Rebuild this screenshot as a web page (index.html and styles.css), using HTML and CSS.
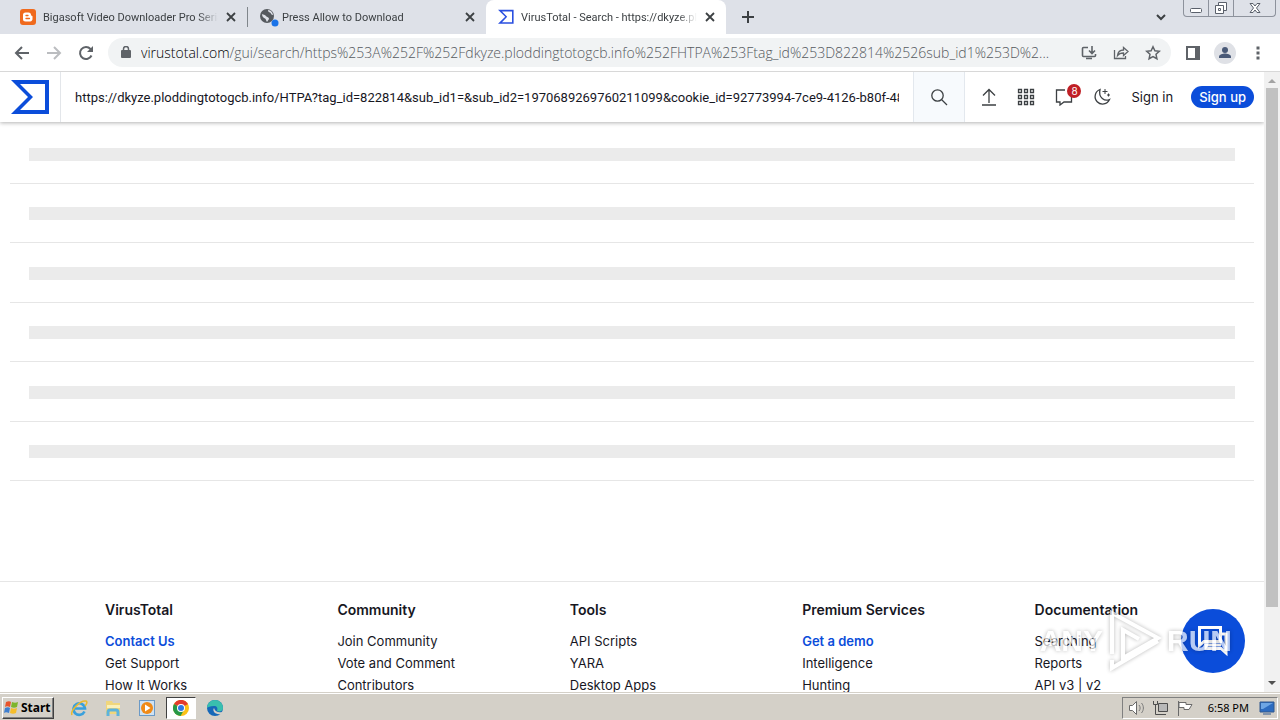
FILE: index.html
```
<!DOCTYPE html>
<html lang="en">
<head>
  <meta charset="UTF-8">
  <meta name="viewport" content="width=device-width, initial-scale=1.0">
  <title>VirusTotal - Search</title>
  <link rel="stylesheet" href="styles.css">
</head>
<body>
  <div class="tab-strip">
    <div class="tab first">
      <svg class="favicon" width="16" height="16" viewBox="0 0 16 16"><rect width="16" height="16" rx="3" fill="#f06a1d"/><path d="M5.500 3.500h3A2.500 2.500 0 0 1 11 6c0 1 1.500.5 1.500 1.500v2A2.500 2.500 0 0 1 10 12.500H5.500A2.500 2.500 0 0 1 3 10V6a2.500 2.500 0 0 1 2.500-2.500z" fill="#fff"/><path d="M6 6.500h2M6 9.500h3.500" stroke="#f06a1d" stroke-width="1.300" stroke-linecap="round"/></svg>
      <span class="tab-title">Bigasoft Video Downloader Pro Serial</span>
      <button class="icon-button tab-close" aria-label="Close tab"><svg width="10" height="10" viewBox="0 0 10 10"><path d="M1 1l8 8M9 1l-8 8" stroke="#3c4043" stroke-width="1.800"/></svg></button>
    </div>
    <div class="tab second">
      <svg class="favicon" width="20" height="20" viewBox="0 0 20 20"><circle cx="7" cy="9" r="7" fill="#55595e"/><path d="M2 7c1.500 1 3 .5 4 2s3 1 3 3l-2 3c-1-1-1-3-2-3.500S2 10 2 7zM8 3c0 2 1 2 2 2.500S11 8 13 8c0-2-2-5-5-5z" fill="#dee1e8"/><circle cx="15" cy="16" r="3.500" fill="#1a73e8"/></svg>
      <span class="tab-title">Press Allow to Download</span>
      <button class="icon-button tab-close" aria-label="Close tab"><svg width="10" height="10" viewBox="0 0 10 10"><path d="M1 1l8 8M9 1l-8 8" stroke="#3c4043" stroke-width="1.800"/></svg></button>
    </div>
    <div class="tab active">
      <svg class="favicon" width="16" height="16" viewBox="0 0 40 36"><path d="M0 0h39v35H0l18-17.500zM10 4l13 13.500L10 31h25V4z" fill="#2a4fe0" fill-rule="evenodd"/></svg>
      <span class="tab-title">VirusTotal - Search - https://dkyze.plodding</span>
      <button class="icon-button tab-close" aria-label="Close tab"><svg width="10" height="10" viewBox="0 0 10 10"><path d="M1 1l8 8M9 1l-8 8" stroke="#3c4043" stroke-width="1.800"/></svg></button>
    </div>
    <button class="icon-button new-tab" aria-label="New tab"><svg width="12" height="12" viewBox="0 0 12 12"><path d="M6 0v12M0 6h12" stroke="#3c4043" stroke-width="2"/></svg></button>
    <button class="icon-button tab-search" aria-label="Search tabs"><svg width="10" height="7" viewBox="0 0 10 7"><path d="M1 1l4 4 4-4" fill="none" stroke="#3c4043" stroke-width="2"/></svg></button>
    <div class="window-controls">
      <button aria-label="Minimize"><svg width="24" height="16" viewBox="0 0 24 16"><rect x="6.500" y="8.500" width="11" height="4" rx="1" fill="#fff" stroke="#5a606b"/></svg></button>
      <button aria-label="Restore"><svg width="24" height="16" viewBox="0 0 24 16"><path d="M9.500 5V2.500h8v8H15M6.500 5.500h8v8h-8zM9.500 8.500h2v2h-2z" fill="#fff" stroke="#5a606b"/></svg></button>
      <button aria-label="Close"><svg width="41" height="16" viewBox="0 0 41 16"><path d="M16 3.500h3l2 2.500 2-2.500h3L22.500 8l3.500 4.500h-3L21 10l-2 2.500h-3L19.500 8z" fill="#fff" stroke="#5a606b"/></svg></button>
    </div>
  </div>

  <div class="toolbar">
    <button class="icon-button nav" aria-label="Back"><svg width="16" height="14" viewBox="0 0 16 14"><path d="M15 7H2M8 1L2 7l6 6" fill="none" stroke="#5f6368" stroke-width="2"/></svg></button>
    <button class="icon-button nav" aria-label="Forward"><svg width="16" height="14" viewBox="0 0 16 14"><path d="M1 7h13M8 1l6 6-6 6" fill="none" stroke="#bbbdc0" stroke-width="2"/></svg></button>
    <button class="icon-button nav" aria-label="Reload"><svg width="16" height="16" viewBox="0 0 16 16"><path d="M13.500 10.500A6 6 0 1 1 12.500 4L14 5.500" fill="none" stroke="#5f6368" stroke-width="2"/><path d="M15 1v6H9z" fill="#5f6368"/></svg></button>
    <div class="address">
      <svg width="10" height="13" viewBox="0 0 10 13"><rect y="4" width="10" height="8" rx="1" fill="#5f6368"/><path d="M2.500 5V3a2.500 2.500 0 0 1 5 0v2" fill="none" stroke="#5f6368" stroke-width="1.500"/></svg>
      <span class="url"><b>virustotal.com</b>/gui/search/https%253A%252F%252Fdkyze.ploddingtotogcb.info%252FHTPA%253Ftag_id%253D822814%2526sub_id1%253D%2...</span>
      <button class="icon-button" aria-label="Install"><svg width="16" height="16" viewBox="0 0 16 16"><path d="M7 2.500H2.500a1 1 0 0 0-1 1v7a1 1 0 0 0 1 1h11a1 1 0 0 0 1-1V9M5 13.500h6M11 1v7M8 5.500l3 3 3-3" fill="none" stroke="#5f6368" stroke-width="1.600"/></svg></button>
      <button class="icon-button" aria-label="Share"><svg width="16" height="16" viewBox="0 0 16 16"><path d="M1.500 5v8.500h11V11M4.500 10.500c.5-4 2.500-5.500 6-5.500V2.500L15 6.500l-4.500 4V8C8 8 6 8.500 4.500 10.500z" fill="none" stroke="#5f6368" stroke-width="1.300"/></svg></button>
      <button class="icon-button" aria-label="Bookmark"><svg width="16" height="16" viewBox="0 0 16 16"><path d="M8 1.800l1.900 4 4.400.5-3.300 3 .9 4.400L8 11.500l-3.900 2.200.9-4.400-3.300-3 4.400-.5z" fill="none" stroke="#5f6368" stroke-width="1.500"/></svg></button>
    </div>
    <button class="icon-button side" aria-label="Side panel"><svg width="14" height="14" viewBox="0 0 14 14"><path d="M1 1h12v12H1z" fill="none" stroke="#5f6368" stroke-width="2"/><path d="M9 1h5v12H9z" fill="#5f6368"/></svg></button>
    <button class="icon-button profile" aria-label="Profile"><svg width="22" height="22" viewBox="0 0 22 22"><circle cx="11" cy="11" r="11" fill="#dfe1e6"/><circle cx="11" cy="8" r="3" fill="#4a5a78"/><path d="M5 16v-1.500c0-2 4-3 6-3s6 1 6 3V16z" fill="#4a5a78"/></svg></button>
    <button class="icon-button menu" aria-label="Menu"><svg width="4" height="14" viewBox="0 0 4 14"><path d="M.5.500h3v3h-3zM.5 5.500h3v3h-3zM.5 10.500h3v3h-3z" fill="#5f6368"/></svg></button>
  </div>

  <div class="viewport">
    <div class="page">
      <header class="vt-header">
        <a class="logo" href="#" aria-label="VirusTotal"><svg width="38" height="34" viewBox="0 0 38 34"><path d="M0 0h38v34H0l17-17zM9 4l13 13L9 30h25V4z" fill="#0b4dda" fill-rule="evenodd"/></svg></a>
        <input class="search-text" aria-label="Search" value="https://dkyze.ploddingtotogcb.info/HTPA?tag_id=822814&amp;sub_id1=&amp;sub_id2=1970689269760211099&amp;cookie_id=92773994-7ce9-4126-b80f-48a1">
        <button class="search-button" aria-label="Run search"><svg width="18" height="18" viewBox="0 0 18 18"><circle cx="7.500" cy="7.500" r="5.700" fill="none" stroke="#3c4043" stroke-width="1.300"/><path d="M11.500 11.500l5.500 5.500" stroke="#3c4043" stroke-width="1.300"/></svg></button>
        <nav class="actions">
          <button class="icon-button" aria-label="Upload"><svg width="16" height="18" viewBox="0 0 16 18"><path d="M8 15V1.500M2 7.500l6-6 6 6M1 17h14" fill="none" stroke="#3c4043" stroke-width="1.300"/></svg></button>
          <button class="icon-button" aria-label="Apps"><svg width="18" height="18" viewBox="0 0 18 18"><path d="M1.500 1.500h3v3h-3zM7.500 1.500h3v3h-3zM13.500 1.500h3v3h-3zM1.500 7.500h3v3h-3zM7.500 7.500h3v3h-3zM13.500 7.500h3v3h-3zM1.500 13.500h3v3h-3zM7.500 13.500h3v3h-3zM13.500 13.500h3v3h-3z" fill="none" stroke="#3c4043" stroke-width="1.300"/></svg></button>
          <button class="icon-button notifications" aria-label="Notifications"><svg width="18" height="18" viewBox="0 0 18 18"><path d="M10 2H1.500v12H5v3l4-3h7.500V9" fill="none" stroke="#3c4043" stroke-width="1.300"/></svg><span class="badge">8</span></button>
          <button class="icon-button" aria-label="Dark mode"><svg width="18" height="18" viewBox="0 0 18 18"><path d="M7 1.500a7.500 7.500 0 1 0 9.500 10C12 13.500 5 10 7 1.500z" fill="none" stroke="#3c4043" stroke-width="1.300"/><path d="M12 1v5M9.500 3.500h5M15.500 5.500v3M14 7h3" stroke="#3c4043"/></svg></button>
        </nav>
        <a class="sign-in" href="#">Sign in</a>
        <a class="sign-up" href="#">Sign up</a>
      </header>

      <main class="results">
        <div class="row"><div class="placeholder"></div></div>
        <div class="row"><div class="placeholder"></div></div>
        <div class="row"><div class="placeholder"></div></div>
        <div class="row"><div class="placeholder"></div></div>
        <div class="row"><div class="placeholder"></div></div>
        <div class="row"><div class="placeholder"></div></div>
      </main>

      <footer class="vt-footer">
        <div class="column">
          <h2>VirusTotal</h2>
          <a class="strong" href="#">Contact Us</a>
          <a href="#">Get Support</a>
          <a href="#">How It Works</a>
        </div>
        <div class="column">
          <h2>Community</h2>
          <a href="#">Join Community</a>
          <a href="#">Vote and Comment</a>
          <a href="#">Contributors</a>
        </div>
        <div class="column">
          <h2>Tools</h2>
          <a href="#">API Scripts</a>
          <a href="#">YARA</a>
          <a href="#">Desktop Apps</a>
        </div>
        <div class="column">
          <h2>Premium Services</h2>
          <a class="strong" href="#">Get a demo</a>
          <a href="#">Intelligence</a>
          <a href="#">Hunting</a>
        </div>
        <div class="column">
          <h2>Documentation</h2>
          <a href="#">Searching</a>
          <a href="#">Reports</a>
          <a href="#">API v3 | v2</a>
        </div>
      </footer>
    </div>
    <div class="scrollbar">
      <svg width="16" height="16" viewBox="0 0 16 16"><path d="M4 11l4-4 4 4z" fill="#a3a3a3"/></svg>
      <div class="thumb"></div>
      <svg width="16" height="16" viewBox="0 0 16 16"><path d="M4 5l4 4 4-4z" fill="#505050"/></svg>
    </div>
    <button class="chat" aria-label="Chat"><svg width="32" height="32" viewBox="0 0 32 32"><path d="M2.500 2.500h21v14H7l-4.500 4zM24 9h5v19l-5-4.500H9V20h15" fill="none" stroke="#fff" stroke-width="3"/></svg></button>
    <div class="watermark">
      <span>ANY</span>
      <svg width="54" height="62" viewBox="0 0 54 62"><path d="M4 44V3l46 25L15 48V20l16 9M4 50v8l46-27" fill="none" stroke="#fff" stroke-width="4"/></svg>
      <span>RUN</span>
    </div>
  </div>

  <div class="taskbar">
    <button class="start"><svg width="17" height="16" viewBox="0 0 17 16"><path d="M3 2c2-1 4-1 5 0L7 7c-2-1-4-1-5 0z" fill="#e8542c"/><path d="M9 2c2 1 4 1 6 0l-1 5c-2 1-4 1-6 0z" fill="#7db52c"/><path d="M2 8c2-1 4-1 5 0l-1 5c-2-1-4-1-5 0z" fill="#3f7fd0"/><path d="M8 8c2 1 4 1 6 0l-1 5c-2 1-4 1-6 0z" fill="#f5bd2a"/></svg>Start</button>
    <button class="task" aria-label="Internet Explorer"><svg width="18" height="18" viewBox="0 0 18 18"><path d="M14.500 12.500A5.800 5.800 0 1 1 15 9.500H5" fill="none" stroke="#39a0dc" stroke-width="2.600"/><path d="M2 16C0 12 10 1 16 2c2 1 0 4-1 5" fill="none" stroke="#e9b92e" stroke-width="1.500"/></svg></button>
    <button class="task" aria-label="Explorer"><svg width="18" height="18" viewBox="0 0 18 18"><path d="M2 2h6l1 2h7v11H2z" fill="#f0d67c"/><path d="M3 6h13v3H3z" fill="#fbf0b8"/><path d="M4 17v-4a2 2 0 0 1 2-2h6a2 2 0 0 1 2 2v4" fill="none" stroke="#5db3dc" stroke-width="3"/></svg></button>
    <button class="task" aria-label="Media Player"><svg width="18" height="18" viewBox="0 0 18 18"><rect x="1.500" y="1.500" width="15" height="15" fill="#cfe2f3" stroke="#6b9ac7"/><circle cx="9" cy="9" r="6" fill="#f08a17"/><path d="M7 5.500v7l5.500-3.500z" fill="#fff"/></svg></button>
    <button class="task pressed" aria-label="Chrome"><svg width="16" height="16" viewBox="0 0 16 16"><circle cx="8" cy="8" r="8" fill="#fbc116"/><path d="M8 8L1 4a8 8 0 0 1 14 0z" fill="#e33b2e"/><path d="M8 8L1 4a8 8 0 0 0 6.500 12L11 10z" fill="#279847"/><circle cx="8" cy="8" r="4" fill="#fff"/><circle cx="8" cy="8" r="3" fill="#2f78e4"/></svg></button>
    <button class="task" aria-label="Edge"><svg width="18" height="18" viewBox="0 0 18 18"><circle cx="9" cy="9" r="8" fill="#1668b8"/><path d="M1 9a8 8 0 0 1 16 0c0 3-3 4-6 3 1-3 0-5-3-5-4 0-6 1-7 2z" fill="#39bfae"/><path d="M8 9c-2 3 1 7 7 6 1-1 1-2 1-2-3 1-7 0-8-4z" fill="#d4d0c8"/></svg></button>
    <div class="tray">
      <svg width="18" height="16" viewBox="0 0 18 16"><path d="M1.500 5.500h3l4-4v13l-4-4h-3z" fill="#fff" stroke="#6a6a6a"/><path d="M11 5c1.500 2 1.500 4 0 6M13.500 3c2.500 3 2.500 7 0 10" fill="none" stroke="#7a7a7a"/></svg>
      <svg width="18" height="16" viewBox="0 0 18 16"><path d="M6.500 3.500h9v8h-9z" fill="#b8b8b8" stroke="#4d4d4d"/><path d="M1.500 1v3.500h4V1M3.500 5v9.500H14" fill="none" stroke="#4d4d4d"/></svg>
      <svg width="18" height="16" viewBox="0 0 18 16"><path d="M2.500 1v15M3 2.500h7v2h6l-3 5H8v-2H3z" fill="#fff" stroke="#6a6a6a"/></svg>
      <time>6:58 PM</time>
      <svg width="16" height="14" viewBox="0 0 16 14"><path d="M1 1h14v10H1z" fill="#2d6cc0" stroke="#31588e"/><path d="M2 2h12L4 8H2z" fill="#6ea6e4"/><path d="M4 13h8" stroke="#31588e"/></svg>
    </div>
  </div>
</body>
</html>
```
FILE: styles.css
```
* {
  box-sizing: border-box;
}

body {
  margin: 0;
  height: 100vh;
  display: flex;
  flex-direction: column;
  overflow: hidden;
  background: #fff;
  font-family: "Noto Sans", sans-serif;
}

button {
  font: inherit;
  padding: 0;
  border: 0;
  background: none;
}

a {
  color: inherit;
  text-decoration: none;
}

svg {
  display: block;
  flex: none;
}

.icon-button {
  display: flex;
  align-items: center;
  justify-content: center;
  flex: none;
}

/* Browser tabs */
.tab-strip {
  display: flex;
  align-items: center;
  flex: none;
  height: 34px;
  background: #dee1e8;
  font-family: Roboto, sans-serif;
  font-size: 11px;
  color: #3c4043;
}

.tab {
  display: flex;
  align-items: center;
  height: 34px;
  padding: 0 10px 0 12px;
  gap: 7px;
  width: 240px;
}

.tab.first {
  width: 247px;
  padding-left: 20px;
}

.tab.second {
  width: 239px;
  padding-left: 12px;
  gap: 2px;
}

.tab.second::before {
  content: "";
  width: 1px;
  height: 20px;
  background: #80868b;
  margin-left: -12px;
  margin-right: 10px;
}

.tab.active {
  background: #fff;
  border-radius: 8px 8px 0 0;
}

.tab-title {
  flex: 1;
  overflow: hidden;
  white-space: nowrap;
  -webkit-mask-image: linear-gradient(to left, transparent, #000 20px);
  mask-image: linear-gradient(to left, transparent, #000 20px);
}

.tab-close {
  width: 12px;
  height: 16px;
}

.new-tab {
  width: 44px;
}

.tab-search {
  width: 20px;
  margin-left: auto;
}

.window-controls {
  display: flex;
  align-self: flex-start;
  margin: 0 4px 0 12px;
  border: 1px solid #8d929c;
  border-top: 0;
  border-radius: 0 0 4px 4px;
}

.window-controls button + button {
  border-left: 1px solid #8d929c;
}

/* Browser toolbar */
.toolbar {
  display: flex;
  align-items: center;
  flex: none;
  height: 38px;
  padding: 0 20px 0 6px;
  border-bottom: 1px solid #d8d8d8;
}

.nav {
  width: 32px;
}

.address {
  display: flex;
  align-items: center;
  flex: 1;
  min-width: 0;
  height: 29px;
  margin-left: 6px;
  padding: 0 10px 0 13px;
  gap: 16px;
  border-radius: 15px;
  background: #f1f3f4;
}

.url {
  flex: 1;
  overflow: hidden;
  white-space: nowrap;
  margin: 0 -10px 0 -6px;
  font-family: "Open Sans", sans-serif;
  font-size: 14px;
  font-weight: 300;
  color: #55595e;
}

.url b {
  font-weight: inherit;
  color: #000;
}

.side {
  margin-left: 15px;
}

.profile {
  margin-left: 14px;
}

.menu {
  margin-left: 20px;
}

/* Page area */
.viewport {
  position: relative;
  display: flex;
  flex: 1;
  min-height: 0;
}

.page {
  flex: 1;
  min-width: 0;
  overflow: hidden;
  font-family: Inter, sans-serif;
  font-size: 13px;
  color: #17171f;
}

.vt-header {
  display: flex;
  align-items: center;
  height: 50px;
  padding-right: 10px;
  box-shadow: 0 1px 4px rgba(0, 0, 0, 0.3);
}

.logo {
  display: flex;
  align-items: center;
  align-self: stretch;
  width: 61px;
  padding-left: 11px;
  border-right: 1px solid #e3e6ea;
}

.search-text {
  flex: 1;
  min-width: 0;
  height: 40px;
  margin: 0 14px;
  padding: 0;
  border: 0;
  outline: 0;
  font-family: Roboto, sans-serif;
  font-size: 13px;
  color: inherit;
}

.search-button {
  display: flex;
  align-items: center;
  justify-content: center;
  align-self: stretch;
  width: 52px;
  border: 1px solid #e3e8ee;
  border-width: 0 1px;
  background: #f7fafd;
}

.actions {
  display: flex;
  align-items: center;
  gap: 20px;
  margin: 0 20px 0 16px;
}

.notifications {
  position: relative;
}

.badge {
  position: absolute;
  top: -4px;
  right: -8px;
  width: 14px;
  height: 14px;
  border-radius: 50%;
  background: #c01f25;
  color: #fff;
  font-size: 10px;
  line-height: 14px;
}

.sign-up {
  margin-left: 18px;
  padding: 0 8px;
  border-radius: 11px;
  background: #0b4dda;
  color: #fff;
  font-weight: 500;
  line-height: 22px;
}

.results {
  padding: 0 10px;
}

.row {
  height: 59px;
  padding: 23px 19px;
  border-bottom: 1px solid #e6e6e6;
}

.row:nth-child(odd) {
  height: 60px;
  padding-top: 24px;
}

.row:first-child {
  height: 62px;
  padding-top: 26px;
}

.placeholder {
  height: 13px;
  background: #ebebeb;
}

.vt-footer {
  display: grid;
  grid-template-columns: repeat(5, 1fr);
  gap: 108px;
  margin-top: 100px;
  padding: 17px 105px 0;
  border-top: 1px solid #e6e6e6;
}

.column {
  display: flex;
  flex-direction: column;
  line-height: 22px;
  white-space: nowrap;
}

.column h2 {
  margin: 0 0 9px;
  font-size: 14px;
  font-weight: 600;
}

.strong {
  color: #0b4dda;
  font-weight: 600;
}

.scrollbar {
  display: flex;
  flex-direction: column;
  width: 16px;
  background: #f1f1f1;
}

.thumb {
  flex: 0 1 519px;
  margin: 0 2px auto;
  background: #c1c1c1;
}

.chat {
  position: absolute;
  right: 35px;
  bottom: 19px;
  display: flex;
  align-items: center;
  justify-content: center;
  width: 64px;
  height: 64px;
  border-radius: 50%;
  background: #0b4dda;
}

.watermark {
  position: absolute;
  right: 48px;
  bottom: 20px;
  display: flex;
  align-items: center;
  gap: 5px;
  font-family: "Liberation Sans Narrow", "Liberation Sans", sans-serif;
  font-size: 30px;
  font-weight: bold;
  color: #fff;
  opacity: 0.7;
  filter: drop-shadow(0 0 2px rgba(0, 0, 0, 0.4));
  pointer-events: none;
}

/* Windows taskbar */
.taskbar {
  display: flex;
  align-items: center;
  flex: none;
  height: 28px;
  padding: 2px 2px 0;
  border-top: 1px solid #d4d0c8;
  background: #d4d0c8;
  box-shadow: inset 0 1px 0 #fff;
}

.start {
  display: flex;
  align-items: center;
  gap: 1px;
  height: 22px;
  width: 52px;
  margin-right: 10px;
  border: 1px solid;
  border-color: #fff #404040 #404040 #fff;
  box-shadow: inset -1px -1px 0 #808080;
  font-size: 12px;
  font-weight: bold;
  color: #000;
}

.task {
  display: flex;
  align-items: center;
  justify-content: center;
  width: 30px;
  height: 22px;
  margin-right: 4px;
}

.task.pressed {
  border: 1px solid;
  border-color: #404040 #fff #fff #404040;
  background: #fff;
}

.tray {
  display: flex;
  align-items: center;
  gap: 6px;
  height: 22px;
  margin-left: auto;
  padding: 0 2px 0 5px;
  border: 1px solid;
  border-color: #808080 #fff #fff #808080;
  font-size: 11px;
  color: #000;
}

.tray time {
  margin: 0 4px 0 8px;
}
```
